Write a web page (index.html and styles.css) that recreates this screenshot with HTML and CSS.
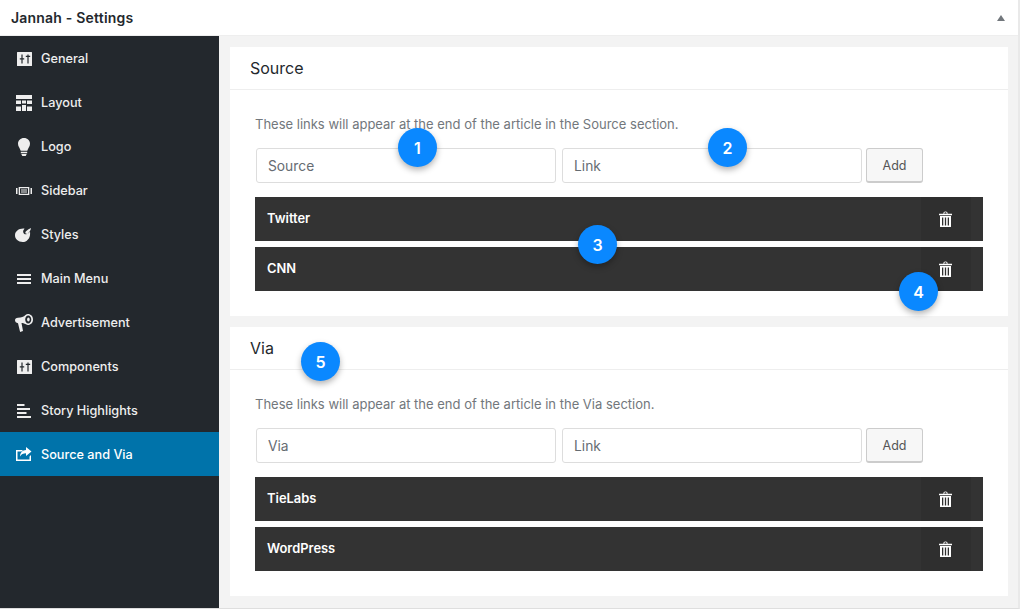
FILE: index.html
```html
<!DOCTYPE html>
<html lang="en">
<head>
<meta charset="utf-8">
<title>Jannah - Settings</title>
<link rel="stylesheet" href="styles.css">
</head>
<body>
<svg class="defs" width="0" height="0" aria-hidden="true">
  <defs>
    <symbol id="i-sliders" viewBox="0 0 18 20">
      <path fill-rule="evenodd" d="M2.500 4h14a.5.5 0 0 1 .5.5v13a.5.5 0 0 1-.5.5h-14a.5.5 0 0 1-.5-.5v-13a.5.5 0 0 1 .5-.5zM6.400 6.500v3.700H4.800v1.200h1.600v4.100h1.200v-4.100h1.600v-1.200H7.600V6.500zM12.400 6.500v1.300h-1.600V9h1.600v6.500h1.200V9h1.600V7.800h-1.600V6.500z"/>
    </symbol>
    <symbol id="i-trash" viewBox="0 0 13 16">
      <path fill-rule="evenodd" d="M0 2.800h13v1.400H0zM4.400 2.800C4.400 1.300 5 .5 6.500.5s2.100.8 2.100 2.300H7.700C7.700 1.800 7.300 1.300 6.500 1.300s-1.200.5-1.200 1.500zM1 5h11v10.500a.5.500 0 0 1-.5.500h-10a.5.500 0 0 1-.5-.5zM3 6.500V14.500h1.300V6.500zM5.850 6.500V14.500h1.300V6.500zM8.700 6.500V14.500H10V6.500z"/>
    </symbol>
  </defs>
</svg>
<div class="window">
  <header class="titlebar">
    <h1 class="title">Jannah - Settings</h1>
    <span class="caret"></span>
  </header>
  <div class="panel">
    <nav class="sidebar">
      <a class="nav-item"><svg class="nav-icon" viewBox="0 0 18 20"><use href="#i-sliders"/></svg>General</a>
      <a class="nav-item"><svg class="nav-icon" viewBox="0 0 18 20"><path d="M1 3h16v4H1zM1 8.500h5V12H1zM7 8.500h4v3H7zM12 8.500h5V12h-5zM1 14.500h5V19H1zM7 13h4v6H7zM12 14.500h5V19h-5z"/></svg>Layout</a>
      <a class="nav-item"><svg class="nav-icon" viewBox="0 0 18 20"><path d="M9 2c3.500 0 6 2.500 6 5.700 0 2.900-2 4.200-2.700 7.100H5.700C5 11.900 3 10.600 3 7.700 3 4.500 5.500 2 9 2zM5.800 15.800h6.400v1.500H5.800zM6.300 18h5.400l-1 2H7.300z"/></svg>Logo</a>
      <a class="nav-item"><svg class="nav-icon" viewBox="0 0 18 20"><path fill-rule="evenodd" d="M1 8h1.500v6H1zM15.500 8H17v6h-1.500zM3.700 7h10.600v8H3.700zM5 8.200v5.600h8V8.200z"/><path d="M6 9.500h6v1H6zM6 11.500h6v1H6z"/></svg>Sidebar</a>
      <a class="nav-item"><svg class="nav-icon" viewBox="0 0 18 20"><path d="M16 4c-.3 2.500-1.700 4.300-3.400 5.400-.9.600-1.700.5-2.100-.2-.3-.7-.2-1.200.5-1.900C12.100 6.200 14 4.800 16 4zM8.200 4.600c.5 0 1 .1 1.400.2C8.600 5.700 8 6.700 8.200 7.900c.3 2 2.100 2.900 3.700 2.100.8-.4 1.900-1 3.100-2.200.1.600.1 1.200.1 1.900 0 4.600-3.300 8.300-7.400 8.300C3.200 18 0 15.100 0 11.300 0 7.500 3.700 4.600 8.200 4.600z"/></svg>Styles</a>
      <a class="nav-item"><svg class="nav-icon" viewBox="0 0 18 20"><path d="M2 6h14v2H2zM2 10h14v2H2zM2 14h14v2H2z"/></svg>Main Menu</a>
      <a class="nav-item"><svg class="nav-icon" viewBox="0 0 18 20"><path fill-rule="evenodd" d="M13 2c2.800 0 5 2.300 5 5.500S15.800 13 13 13c-.8 0-1.500-.2-2.100-.7-1.800-1-3.300-1.300-4.400-1.300L8 19l-2.900 1L3 11.200C1.200 11 0 9.800 0 8.300c0-1.500 1-2.300 3-2.500 3.500-.2 5.700-1.100 7.500-2.900C11.200 2.300 12 2 13 2zM13.200 3.500c-1.800 0-3 1.700-3 4s1.200 4 3 4 3.100-1.700 3.100-4-1.300-4-3.100-4z"/><ellipse cx="13.400" cy="7.500" rx="1.300" ry="2.100"/></svg>Advertisement</a>
      <a class="nav-item"><svg class="nav-icon" viewBox="0 0 18 20"><use href="#i-sliders"/></svg>Components</a>
      <a class="nav-item"><svg class="nav-icon" viewBox="0 0 18 20"><path d="M2 4h7.500v2H2zM2 8h13v2H2zM2 12h9.500v2H2zM2 16h14v2H2z"/></svg>Story Highlights</a>
      <a class="nav-item nav-item-active"><svg class="nav-icon" viewBox="0 0 18 20"><path d="M1 6h7L6.500 7.500h-4v8h12v-3L16 11v6H1z"/><path d="M11 3l5.500 4.500L11 12V9.300C8.200 9.300 6.300 10 5 12.500 5.300 8.500 7.500 6.200 11 6z"/></svg>Source and Via</a>
    </nav>
    <main class="content">
      <section class="card">
        <h2 class="card-title">Source</h2>
        <div class="card-body">
          <p class="hint">These links will appear at the end of the article in the Source section.</p>
          <form class="add-form">
            <input class="field" type="text" placeholder="Source">
            <input class="field" type="text" placeholder="Link">
            <button class="add-btn" type="button">Add</button>
          </form>
          <ul class="link-list">
            <li class="link-row"><span class="link-name">Twitter</span><span class="link-del"><svg class="trash" viewBox="0 0 13 16"><use href="#i-trash"/></svg></span></li>
            <li class="link-row"><span class="link-name">CNN</span><span class="link-del"><svg class="trash" viewBox="0 0 13 16"><use href="#i-trash"/></svg></span></li>
          </ul>
        </div>
      </section>
      <section class="card">
        <h2 class="card-title">Via</h2>
        <div class="card-body">
          <p class="hint">These links will appear at the end of the article in the Via section.</p>
          <form class="add-form">
            <input class="field" type="text" placeholder="Via">
            <input class="field" type="text" placeholder="Link">
            <button class="add-btn" type="button">Add</button>
          </form>
          <ul class="link-list">
            <li class="link-row"><span class="link-name">TieLabs</span><span class="link-del"><svg class="trash" viewBox="0 0 13 16"><use href="#i-trash"/></svg></span></li>
            <li class="link-row"><span class="link-name">WordPress</span><span class="link-del"><svg class="trash" viewBox="0 0 13 16"><use href="#i-trash"/></svg></span></li>
          </ul>
        </div>
      </section>
    </main>
  </div>
  <span class="badge badge-1">1</span>
  <span class="badge badge-2">2</span>
  <span class="badge badge-3">3</span>
  <span class="badge badge-4">4</span>
  <span class="badge badge-5">5</span>
</div>
</body>
</html>
```

FILE: styles.css
```css
* { box-sizing: border-box; }
html, body { margin: 0; padding: 0; background: #fff; }
body { font-family: Inter, "Liberation Sans", sans-serif; height: 610px; overflow: hidden; }
.defs { position: absolute; }
.window {
  position: relative;
  width: 1020px;
  height: 609px;
  border-right: 2px solid #e9e9e9;
  border-bottom: 1px solid #dedede;
  display: flex;
  flex-direction: column;
}
.titlebar {
  height: 36px;
  flex: none;
  display: flex;
  align-items: center;
  justify-content: space-between;
  padding: 0 12px 0 11px;
  border-bottom: 1px solid #eeeeee;
  background: #fff;
}
.title { margin: 0; font-size: 14px; font-weight: 600; color: #23282d; letter-spacing: .2px; }
.caret {
  width: 0;
  height: 0;
  margin-top: 1px;
  margin-right: 1px;
  border-left: 4px solid transparent;
  border-right: 4px solid transparent;
  border-bottom: 6px solid #72777c;
}
.panel { flex: 1; display: flex; min-height: 0; }
.sidebar { width: 219px; flex: none; background: #23282d; }
.nav-item {
  height: 44px;
  display: flex;
  align-items: center;
  gap: 8px;
  padding-left: 15px;
  font-size: 12.700px;
  font-weight: 500;
  color: #eeeeee;
}
.nav-item-active { background: #0073aa; color: #fff; }
.nav-icon { width: 18px; height: 20px; fill: #eeeeee; flex: none; }
.nav-item-active .nav-icon { fill: #fff; }
.content {
  flex: 1;
  background: #f3f3f3;
  padding: 11px 10px 0 11px;
  display: flex;
  flex-direction: column;
  gap: 11px;
}
.card { background: #fff; }
.card-title {
  margin: 0;
  height: 43px;
  padding: 0 20px;
  line-height: 43px;
  font-size: 16px;
  font-weight: 400;
  color: #23282d;
  border-bottom: 1px solid #eeeeee;
}
.card-body { padding: 24px 25px 25px; }
.hint { margin: 0 0 14px; font-size: 13px; line-height: 20px; color: #72777c; }
.add-form { display: flex; align-items: stretch; gap: 6px; padding-left: 1px; margin-bottom: 14px; height: 35px; }
.field {
  width: 300px;
  height: 35px;
  padding: 0 11px;
  border: 1px solid #dddddd;
  border-radius: 3px;
  background: #fff;
  font: 400 13.800px Inter, "Liberation Sans", sans-serif;
  color: #666c72;
  outline: none;
}
.field::placeholder { color: #666c72; opacity: 1; }
.add-btn {
  width: 57px;
  height: 35px;
  margin-left: -2px;
  border: 1px solid #cccccc;
  border-bottom-width: 2px;
  border-radius: 3px;
  background: #f7f7f7;
  font: 400 12.500px Inter, "Liberation Sans", sans-serif;
  color: #555555;
  padding: 0;
}
.link-list { list-style: none; margin: 0; padding: 0; display: flex; flex-direction: column; gap: 6px; }
.link-row {
  height: 44px;
  display: flex;
  align-items: center;
  justify-content: space-between;
  padding: 0 12px 0 12px;
  background: #333333;
  color: #fff;
}
.link-name { font-size: 12.900px; font-weight: 600; margin-top: -2px; }
.link-del {
  width: 50px;
  height: 44px;
  display: flex;
  align-items: center;
  justify-content: center;
  padding-right: 2px;
  background: #2f2f2f;
}
.trash { width: 13px; height: 16px; fill: #fff; }
.badge {
  position: absolute;
  width: 39px;
  height: 39px;
  border-radius: 50%;
  background: #0a88ff;
  color: #fff;
  font-size: 16px;
  font-weight: 600;
  display: flex;
  align-items: center;
  justify-content: center;
  box-shadow: 0 3px 6px rgba(0, 0, 0, .3);
}
.badge-1 { left: 398px; top: 128px; }
.badge-2 { left: 708px; top: 128px; }
.badge-3 { left: 578px; top: 225px; }
.badge-4 { left: 899px; top: 272px; }
.badge-5 { left: 301px; top: 342px; }
```
